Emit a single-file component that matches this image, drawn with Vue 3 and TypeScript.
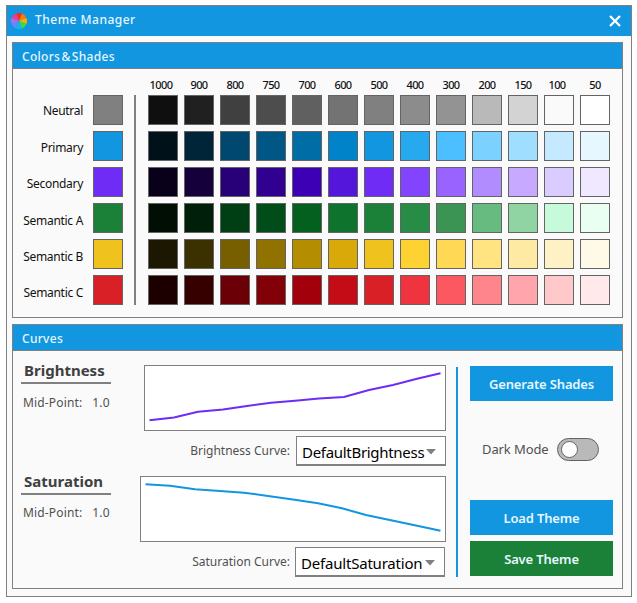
<script setup lang="ts">
import { ref } from 'vue'

interface ShadeRow {
  name: string
  base: string
  shades: string[]
}

const levels: number[] = [1000, 900, 800, 750, 700, 600, 500, 400, 300, 200, 150, 100, 50]

const rows: ShadeRow[] = [
  { name: 'Neutral', base: '#808080', shades: ['#0f0f0f', '#202020', '#404040', '#4d4d4d', '#606060', '#737373', '#808080', '#8c8c8c', '#939393', '#b9b9b9', '#d3d3d3', '#fafafa', '#ffffff'] },
  { name: 'Primary', base: '#1196df', shades: ['#001119', '#002538', '#00486f', '#005785', '#006da6', '#0083c8', '#1196df', '#27a9ef', '#4bbfff', '#7bd1ff', '#a0deff', '#c5eaff', '#e6f7ff'] },
  { name: 'Secondary', base: '#6f2cf4', shades: ['#09001a', '#15003b', '#280078', '#300090', '#3e00b5', '#5416da', '#6f2cf4', '#8244ff', '#9963ff', '#b18cff', '#c7aaff', '#daccff', '#f0e8ff'] },
  { name: 'Semantic A', base: '#1b8138', shades: ['#000e04', '#001f0a', '#003f14', '#004d19', '#04601f', '#0e732d', '#1b8138', '#278c45', '#3b9354', '#68bb80', '#90d4a4', '#c7fada', '#e8fff1'] },
  { name: 'Semantic B', base: '#f0c21d', shades: ['#1c1700', '#3b3000', '#775f00', '#907200', '#b48e00', '#d8a908', '#f0c21d', '#ffd233', '#ffd955', '#ffe481', '#ffeaa3', '#fff1c6', '#fff9e7'] },
  { name: 'Semantic C', base: '#d92027', shades: ['#1c0000', '#370000', '#6b0006', '#820008', '#a2000b', '#c30c15', '#d92027', '#ef343f', '#fc5861', '#ff858c', '#ffa5ab', '#ffc8cb', '#ffe9eb'] },
]

const darkMode = ref(false)
</script>

<template>
  <main class="window">
    <header class="titlebar">
      <svg class="wheel" width="16" height="16" viewBox="-8 -8 16 16">
        <path d="M0 0L-3.06 -7.39A8 8 0 0 1 3.06 -7.39Z" fill="#ff2a1a" />
        <path d="M0 0L3.06 -7.39A8 8 0 0 1 7.39 -3.06Z" fill="#ff7a00" />
        <path d="M0 0L7.39 -3.06A8 8 0 0 1 7.39 3.06Z" fill="#f2b400" />
        <path d="M0 0L7.39 3.06A8 8 0 0 1 3.06 7.39Z" fill="#3fdc3c" />
        <path d="M0 0L3.06 7.39A8 8 0 0 1 -3.06 7.39Z" fill="#10b8f0" />
        <path d="M0 0L-3.06 7.39A8 8 0 0 1 -7.39 3.06Z" fill="#5a8cff" />
        <path d="M0 0L-7.39 3.06A8 8 0 0 1 -7.39 -3.06Z" fill="#b06af0" />
        <path d="M0 0L-7.39 -3.06A8 8 0 0 1 -3.06 -7.39Z" fill="#e8408c" />
      </svg>
      <h1>Theme Manager</h1>
      <svg class="close" width="12" height="12" viewBox="0 0 12 12">
        <path d="M1 1L11 11M11 1L1 11" stroke="#fff" stroke-width="2.3" />
      </svg>
    </header>

    <section class="panel shades-panel">
      <h2 class="panel-title tight">Colors &amp; Shades</h2>
      <div class="shades">
        <div class="names">
          <span v-for="row in rows" :key="row.name">{{ row.name }}</span>
        </div>
        <div class="bases">
          <i v-for="row in rows" :key="row.name" class="swatch" :style="{ background: row.base }"></i>
        </div>
        <div class="rule"></div>
        <div class="matrix">
          <b v-for="level in levels" :key="level" :class="{ nudge: level === 1000 || level === 100 }">{{ level }}</b>
          <template v-for="row in rows" :key="row.name">
            <i v-for="(shade, n) in row.shades" :key="n" class="swatch" :style="{ background: shade }"></i>
          </template>
        </div>
      </div>
    </section>

    <section class="panel curves-panel">
      <h2 class="panel-title">Curves</h2>
      <div class="curves">
        <div class="editors">
          <div class="editor">
            <div class="info">
              <h3>Brightness</h3>
              <p><span>Mid-Point:</span><span class="num">1.0</span></p>
            </div>
            <div class="plot">
              <svg class="chart" width="302" height="66" viewBox="0 0 302 66">
                <rect x=".5" y=".5" width="301" height="65" fill="#fff" stroke="#808080" />
                <polyline points="5.5,55.3 30,52.5 54,46.8 79,44.4 103,41 127,37.8 151,35.7 175,33.6 200,32 225,25 249,20 273,13.8 296.5,8.3" fill="none" stroke="#6f2cf4" stroke-width="2" />
              </svg>
              <div class="picker">
                <label>Brightness Curve:</label>
                <div class="select">
                  <span>DefaultBrightness</span>
                  <svg width="10" height="6" viewBox="0 0 10 6"><path d="M0 0H10L5 5.5Z" fill="#808080" /></svg>
                </div>
              </div>
            </div>
          </div>
          <div class="editor second">
            <div class="info">
              <h3>Saturation</h3>
              <p><span>Mid-Point:</span><span class="num">1.0</span></p>
            </div>
            <div class="plot">
              <svg class="chart" width="306" height="66" viewBox="0 0 306 66">
                <rect x=".5" y=".5" width="305" height="65" fill="#fff" stroke="#808080" />
                <polyline points="5.5,8.2 30,9.8 55,13.3 80,15 104,16.7 128,20 153,23.5 178,27.2 202,32.3 226,39 251,44.2 276,49.6 300.5,54.7" fill="none" stroke="#1196df" stroke-width="2" />
              </svg>
              <div class="picker">
                <label>Saturation Curve:</label>
                <div class="select">
                  <span>DefaultSaturation</span>
                  <svg width="10" height="6" viewBox="0 0 10 6"><path d="M0 0H10L5 5.5Z" fill="#808080" /></svg>
                </div>
              </div>
            </div>
          </div>
        </div>
        <div class="rule accent"></div>
        <div class="actions">
          <button class="btn">Generate Shades</button>
          <div class="dark">
            <span>Dark Mode</span>
            <div class="toggle" :class="{ on: darkMode }" @click="darkMode = !darkMode"><i></i></div>
          </div>
          <button class="btn load">Load Theme</button>
          <button class="btn save">Save Theme</button>
        </div>
      </div>
    </section>
  </main>
</template>

<style>
body {
  background: #fff;
}
</style>

<style scoped>
* {
  box-sizing: border-box;
  margin: 0;
  padding: 0;
}
.window {
  width: 626px;
  height: 592px;
  margin: 5px 0 0 6px;
  border: 1px solid #808080;
  background: #fafafa;
  font-family: "Noto Sans", "Open Sans", sans-serif;
  white-space: nowrap;
}
.titlebar {
  display: flex;
  align-items: center;
  height: 30px;
  padding: 0 10px 0 4px;
  background: #1196df;
}
.wheel {
  margin-top: -1px;
}
h1 {
  margin: -2px 0 0 8px;
  font-size: 12px;
  font-weight: 500;
  line-height: 16px;
  letter-spacing: 0.5px;
  color: #e6f7ff;
}
.close {
  margin-left: auto;
}
.panel {
  width: 611px;
  margin-left: 5px;
  border: 1px solid #808080;
}
.shades-panel {
  height: 276px;
  margin-top: 6px;
}
.curves-panel {
  height: 265px;
  margin-top: 6px;
}
.panel-title {
  height: 26px;
  padding: 1px 0 0 9px;
  border-bottom: 1px solid #808080;
  background: #1196df;
  font-size: 12px;
  font-weight: 500;
  line-height: 25px;
  letter-spacing: 0.3px;
  color: #e6f7ff;
}
.tight {
  word-spacing: -2.2px;
}
.shades {
  display: flex;
  padding-top: 8px;
}
.names {
  display: grid;
  grid-auto-rows: 36.4px;
  width: 70px;
  padding-top: 19.4px;
  font-size: 12px;
  line-height: 30px;
  letter-spacing: -0.3px;
  text-align: right;
  color: #111;
}
.bases {
  display: grid;
  gap: 6px;
  align-content: start;
  margin: 18px 0 0 10px;
}
.swatch {
  display: block;
  width: 30px;
  height: 30px;
  border: 1px solid #646464;
}
.rule {
  width: 2px;
  height: 210px;
  margin: 18px 12px 0 11px;
  background: #808080;
}
.matrix {
  display: grid;
  grid-template-columns: repeat(13, 30px);
  grid-template-rows: 12px;
  gap: 6px;
  align-content: start;
}
.matrix b {
  font-size: 11px;
  font-weight: 500;
  line-height: 15px;
  letter-spacing: -0.6px;
  text-align: center;
  color: #111;
}
.matrix .nudge {
  padding-right: 4px;
}
.curves {
  display: flex;
}
.editors {
  width: 433px;
  padding: 14px 0 0 8px;
}
.editor {
  display: flex;
  justify-content: space-between;
  height: 111px;
}
.info {
  width: 90px;
  color: #404040;
}
h3 {
  height: 19px;
  padding-left: 3px;
  border-bottom: 2px solid #808080;
  font-size: 15px;
  font-weight: 700;
  line-height: 11px;
}
.info p {
  display: flex;
  gap: 10px;
  padding-left: 2px;
  font-size: 12px;
  line-height: 37px;
  letter-spacing: 0.15px;
  color: #505050;
}
.second .info p {
  line-height: 35px;
}
.chart {
  display: block;
}
.picker {
  display: flex;
  justify-content: flex-end;
  margin-top: 5px;
}
.picker label {
  margin-right: 6px;
  font-size: 12px;
  line-height: 29px;
  color: #505050;
}
.select {
  display: flex;
  align-items: center;
  justify-content: space-between;
  width: 150px;
  height: 30px;
  padding: 2px 9px 0 5px;
  border: 1px solid #808080;
  border-bottom-width: 2px;
  background: #fff;
  font-size: 15px;
  line-height: 26px;
  letter-spacing: -0.3px;
  color: #000;
}
.select svg {
  flex: none;
}
.second .picker {
  margin-right: 1px;
}
.second .picker label {
  margin-right: 5px;
}
.second .select {
  letter-spacing: -0.2px;
}
.accent {
  margin: 16px 12px 0 10px;
  background: #1196df;
}
.actions {
  width: 143px;
  padding-top: 15px;
}
.btn {
  display: block;
  width: 143px;
  height: 35px;
  padding-top: 1px;
  border: 0;
  background: #1196df;
  font: 600 13px "Noto Sans", sans-serif;
  letter-spacing: -0.15px;
  color: #e6f7ff;
}
.dark {
  display: flex;
  align-items: center;
  height: 23px;
  margin: 37px 14px 39px 12px;
  justify-content: space-between;
  font-size: 13px;
  letter-spacing: -0.1px;
  color: #505050;
}
.dark span {
  margin-top: -1px;
}
.toggle {
  width: 42px;
  height: 23px;
  padding: 2px 3px;
  border: 1px solid #646464;
  border-radius: 12px;
  background: #b9b9b9;
}
.toggle i {
  display: block;
  width: 17px;
  height: 17px;
  border: 1px solid #646464;
  border-radius: 50%;
  background: #fff;
}
.toggle.on {
  background: #1196df;
}
.toggle.on i {
  margin-left: 17px;
}
.save {
  margin-top: 6px;
  background: #1b8138;
}
</style>
